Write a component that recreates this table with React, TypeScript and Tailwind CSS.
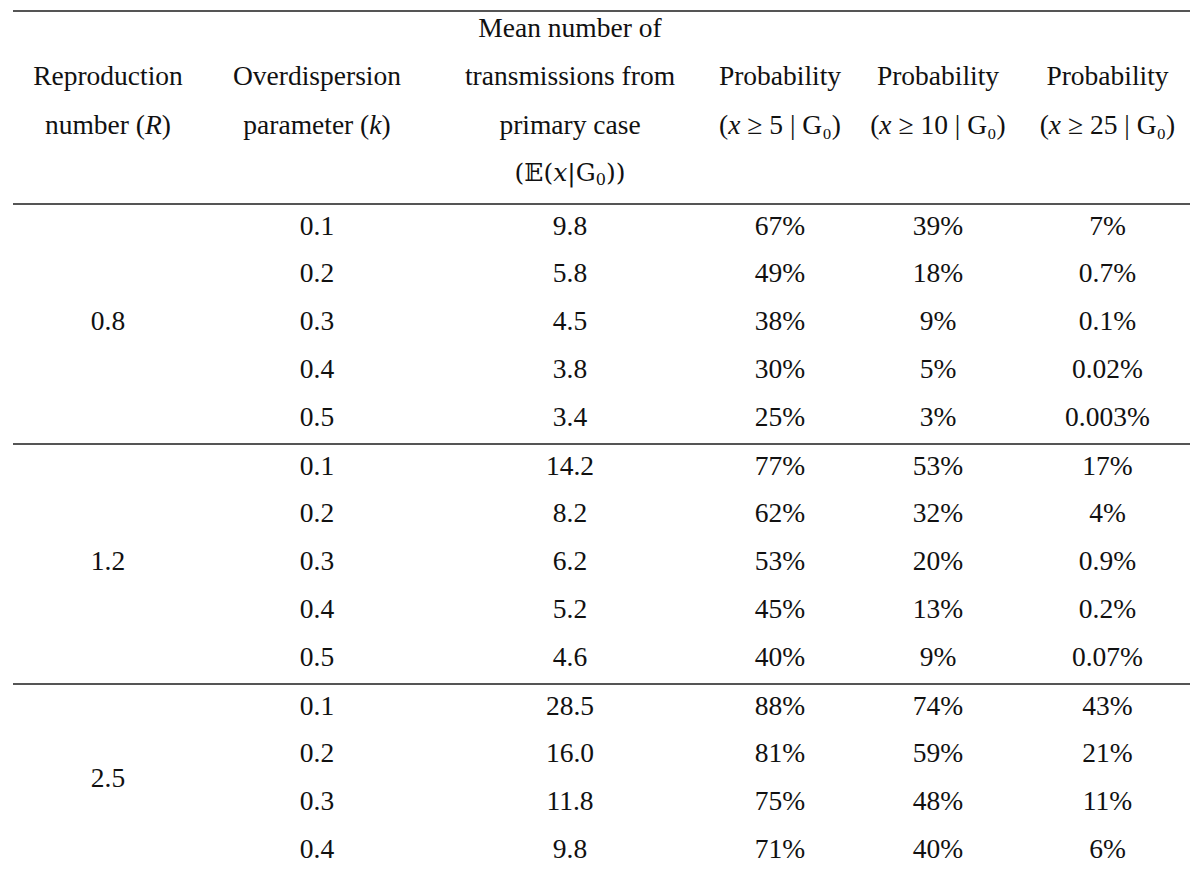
const groups = [
  {
    r: "0.8",
    rows: [
      ["0.1", "9.8", "67%", "39%", "7%"],
      ["0.2", "5.8", "49%", "18%", "0.7%"],
      ["0.3", "4.5", "38%", "9%", "0.1%"],
      ["0.4", "3.8", "30%", "5%", "0.02%"],
      ["0.5", "3.4", "25%", "3%", "0.003%"],
    ],
  },
  {
    r: "1.2",
    rows: [
      ["0.1", "14.2", "77%", "53%", "17%"],
      ["0.2", "8.2", "62%", "32%", "4%"],
      ["0.3", "6.2", "53%", "20%", "0.9%"],
      ["0.4", "5.2", "45%", "13%", "0.2%"],
      ["0.5", "4.6", "40%", "9%", "0.07%"],
    ],
  },
  {
    r: "2.5",
    rows: [
      ["0.1", "28.5", "88%", "74%", "43%"],
      ["0.2", "16.0", "81%", "59%", "21%"],
      ["0.3", "11.8", "75%", "48%", "11%"],
      ["0.4", "9.8", "71%", "40%", "6%"],
    ],
  },
];

// header cell: fixed 192px box, lines centred a little above the middle
const Head = ({ children }: { children: React.ReactNode }) => (
  <th className="font-normal p-0 align-top">
    <div className="h-[191px] flex flex-col justify-center pb-[14px] leading-[48.5px]">
      {children}
    </div>
  </th>
);

const ProbHead = ({ n }: { n: string }) => (
  <Head>
    <div>Probability</div>
    <div className="whitespace-nowrap">
      (<i>x</i> ≥ {n} | G₀)
    </div>
  </Head>
);

export default function App() {
  return (
    <div className="min-h-screen bg-white pt-[10px] pl-[13px] font-['Liberation_Serif',serif] text-[27.5px] text-[#111]">
      <table className="w-[1177px] border-collapse table-fixed text-center">
        <colgroup>
          <col className="w-[190px]" />
          <col className="w-[228px]" />
          <col className="w-[278px]" />
          <col className="w-[142px]" />
          <col className="w-[174px]" />
          <col className="w-[165px]" />
        </colgroup>
        <thead>
          <tr className="border-t-2 border-b-2 border-[#555]">
            <Head>
              <div>Reproduction</div>
              <div>
                number (<i>R</i>)
              </div>
            </Head>
            <Head>
              <div>Overdispersion</div>
              <div>
                parameter (<i>k</i>)
              </div>
            </Head>
            <Head>
              <div>Mean number of</div>
              <div>transmissions from</div>
              <div>primary case</div>
              <div className="font-['DejaVu_Serif',serif] text-[25px]">
                (𝔼(<span className="italic">x</span>|G<sub className="text-[16px]">0</sub>))
              </div>
            </Head>
            <ProbHead n="5" />
            <ProbHead n="10" />
            <ProbHead n="25" />
          </tr>
        </thead>
        {groups.map((g, gi) => (
          <tbody
            key={g.r}
            className={gi < groups.length - 1 ? "border-b-2 border-[#555]" : ""}
          >
            {g.rows.map((row, ri) => (
              <tr key={ri} className="h-[48px]">
                {ri === 0 && (
                  <td rowSpan={g.rows.length} className="p-0 align-middle leading-[40px] pb-[6px]">
                    {g.r}
                  </td>
                )}
                {row.map((cell, ci) => (
                  <td
                    key={ci}
                    className="p-0 align-middle leading-[40px] pb-[6px] whitespace-nowrap"
                  >
                    {cell}
                  </td>
                ))}
              </tr>
            ))}
          </tbody>
        ))}
      </table>
    </div>
  );
}
